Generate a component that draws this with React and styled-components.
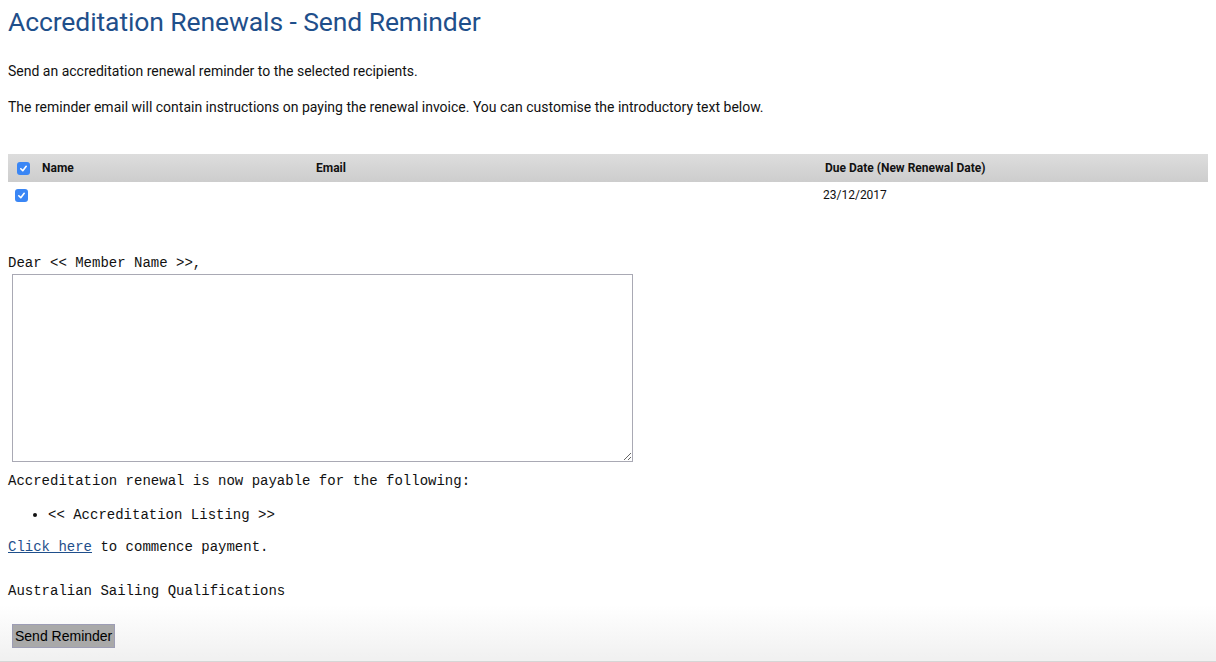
import React from 'react';
import styled, { createGlobalStyle } from 'styled-components';

const Global = createGlobalStyle`
  html, body { margin: 0; padding: 0; background: #fff; }
  body { font-family: Roboto, "Liberation Sans", sans-serif; color: #111; }
`;

const Page = styled.div`
  height: 662px;
  box-sizing: border-box;
  padding: 0 8px;
  display: flex;
  flex-direction: column;
  background: linear-gradient(to bottom, #fff 0, #fff 605px, #f1f1f1 658px);
  border-bottom: 1px solid #d6d6d6;
  overflow: hidden;
`;

const Title = styled.h1`
  margin: 4px 0 0;
  font-size: 26.5px;
  font-weight: 400;
  color: #1f4f8b;
  line-height: 36px;
  letter-spacing: -0.1px;
`;

const Intro = styled.p`
  margin: ${p => p.$top}px 0 0;
  font-size: 14px;
  line-height: 18px;
  color: #111;
`;

const Table = styled.div`
  margin-top: 38px;
  width: 1200px;
  font-size: 12px;
`;

const Row = styled.div`
  display: grid;
  grid-template-columns: 34px 274px 509px 1fr;
  align-items: center;
  height: ${p => (p.$head ? 28 : 25)}px;
  background: ${p => (p.$head ? 'linear-gradient(to bottom, #dddddd, #cdcdcd)' : 'transparent')};
  font-weight: ${p => (p.$head ? 700 : 400)};
`;

const Cell = styled.div`
  margin-left: ${p => p.$ml || 0}px;
`;

const Check = styled.span`
  display: inline-flex;
  align-items: center;
  justify-content: center;
  width: 13px;
  height: 13px;
  border-radius: 3px;
  background: #3a86f5;
  margin-left: ${p => p.$ml}px;
  vertical-align: middle;
`;

const Letter = styled.div`
  margin-top: 48px;
  font-family: "Liberation Mono", monospace;
  font-size: 14px;
  line-height: 16px;
`;

const Line = styled.div`
  margin-top: ${p => p.$top || 0}px;
`;

const Area = styled.textarea`
  display: block;
  margin: 3px 0 0 4px;
  width: 621px;
  height: 188px;
  box-sizing: border-box;
  border: 1px solid #a9a9b4;
  resize: both;
  font-family: "Liberation Mono", monospace;
`;

const List = styled.ul`
  margin: 18px 0 0;
  padding-left: 40px;
  li { line-height: 16px; }
`;

const Link = styled.a`
  color: #1f4f8b;
  text-decoration: underline;
`;

const Button = styled.button`
  margin: 25px 0 0 4px;
  align-self: flex-start;
  height: 24px;
  padding: 0 2px;
  background: #a9a9a9;
  border: 1px solid #9d9db5;
  font-family: "Liberation Sans", Arial, sans-serif;
  font-size: 14px;
  color: #000;
`;

function Tick({ ml }) {
  return (
    <Check $ml={ml}>
      <svg width="9" height="9" viewBox="0 0 10 10">
        <path d="M2 5.3 L4.2 7.4 L8 2.6" fill="none" stroke="#fff" strokeWidth="1.8" strokeLinecap="round" strokeLinejoin="round" />
      </svg>
    </Check>
  );
}

export default function App() {
  return (
    <Page>
      <Global />
      <Title>Accreditation Renewals - Send Reminder</Title>
      <Intro $top={22}>Send an accreditation renewal reminder to the selected recipients.</Intro>
      <Intro $top={18}>The reminder email will contain instructions on paying the renewal invoice. You can customise the introductory text below.</Intro>
      <Table>
        <Row $head>
          <Cell><Tick ml={9} /></Cell>
          <Cell>Name</Cell>
          <Cell>Email</Cell>
          <Cell>Due Date (New Renewal Date)</Cell>
        </Row>
        <Row>
          <Cell><Tick ml={7} /></Cell>
          <Cell></Cell>
          <Cell></Cell>
          <Cell $ml={-2}>23/12/2017</Cell>
        </Row>
      </Table>
      <Letter>
        <Line>Dear &lt;&lt; Member Name &gt;&gt;,</Line>
        <Area />
        <Line $top={11}>Accreditation renewal is now payable for the following:</Line>
        <List><li>&lt;&lt; Accreditation Listing &gt;&gt;</li></List>
        <Line $top={16}><Link href="#">Click here</Link> to commence payment.</Line>
        <Line $top={28}>Australian Sailing Qualifications</Line>
      </Letter>
      <Button>Send Reminder</Button>
    </Page>
  );
}
